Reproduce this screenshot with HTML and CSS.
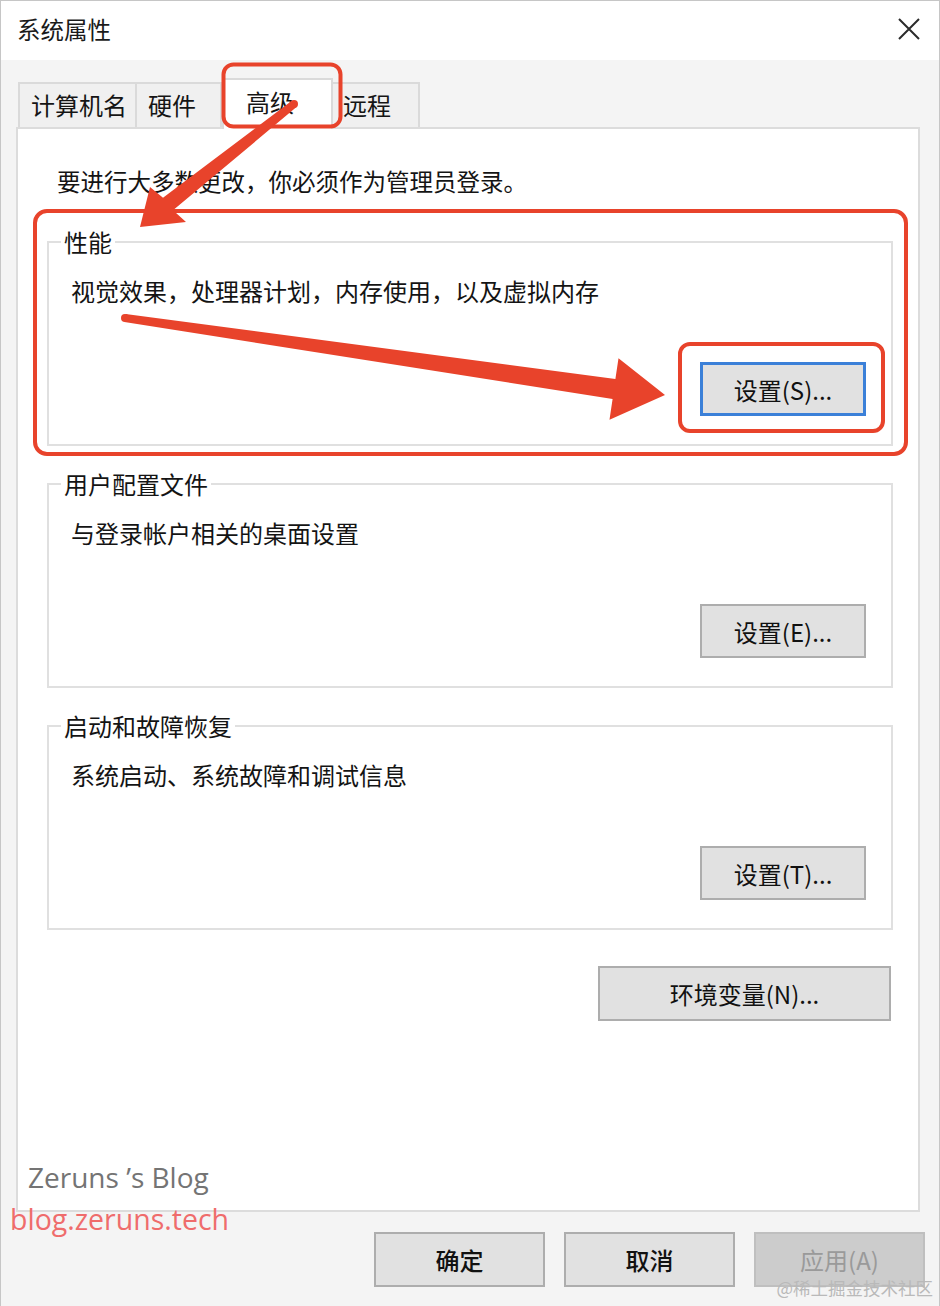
FILE: index.html
```html
<!DOCTYPE html>
<html lang="zh-CN">
<head>
<meta charset="utf-8">
<title>系统属性</title>
<link rel="stylesheet" href="styles.css">
</head>
<body>
<div class="window">
  <div class="titlebar">
    <span class="title">系统属性</span>
    <svg class="close" width="22" height="22" viewBox="0 0 22 22"><path d="M1 1 L21 21 M21 1 L1 21" stroke="#2b2b2b" stroke-width="2" fill="none"/></svg>
  </div>
  <div class="tabs">
    <div class="tab tab-first">计算机名</div>
    <div class="tab tab-next">硬件</div>
    <div class="tab tab-active">高级</div>
    <div class="tab tab-next tab-last">远程</div>
  </div>
  <div class="panel">
    <p class="admin">要进行大多数更改，你必须作为管理员登录。</p>
    <fieldset class="group">
      <legend>性能</legend>
      <p class="desc">视觉效果，处理器计划，内存使用，以及虚拟内存</p>
      <div class="group-actions"><button class="btn btn-focus">设置(S)...</button></div>
    </fieldset>
    <fieldset class="group">
      <legend>用户配置文件</legend>
      <p class="desc">与登录帐户相关的桌面设置</p>
      <div class="group-actions"><button class="btn">设置(E)...</button></div>
    </fieldset>
    <fieldset class="group">
      <legend>启动和故障恢复</legend>
      <p class="desc">系统启动、系统故障和调试信息</p>
      <div class="group-actions"><button class="btn">设置(T)...</button></div>
    </fieldset>
    <div class="env-row"><button class="btn btn-env">环境变量(N)...</button></div>
  </div>
  <div class="footer">
    <button class="btn btn-foot">确定</button>
    <button class="btn btn-foot">取消</button>
    <button class="btn btn-foot btn-disabled">应用(A)</button>
  </div>

  <div class="wm-name">Zeruns ’s Blog</div>
  <div class="wm-url">blog.zeruns.tech</div>
  <div class="wm-juejin">@稀土掘金技术社区</div>

  <svg class="annot" width="940" height="1306" viewBox="0 0 940 1306">
    <g fill="none" stroke="#e8432b" stroke-width="4">
      <rect x="223.5" y="64.5" width="117" height="62" rx="10"/>
      <rect x="35" y="211" width="871" height="243" rx="12"/>
      <rect x="680" y="344" width="203" height="87" rx="10"/>
    </g>
    <g fill="#e8432b">
      <polygon points="291.5,100.9 163,197.7 150,187 140,227 186,222 173,210.3 296.5,107.1"/>
      <circle cx="294" cy="104" r="4"/>
      <polygon points="125.6,314 615.4,379.1 618.5,358.3 665,395 609.5,419.7 612.6,398.9 124.4,322"/>
      <circle cx="125" cy="318" r="4"/>
    </g>
  </svg>
</div>
</body>
</html>
```

FILE: styles.css
```css
* { box-sizing: border-box; }
html, body { margin: 0; padding: 0; }
body {
  width: 940px;
  height: 1306px;
  font-family: "Noto Sans CJK SC", "Noto Sans", sans-serif;
  color: #141414;
  background: #f4f4f4;
}
.window {
  position: relative;
  width: 940px;
  height: 1306px;
  border: 1px solid #c6c6c6;
  border-bottom: none;
  background: #f4f4f4;
  overflow: hidden;
}
.titlebar {
  height: 59px;
  background: #ffffff;
  display: flex;
  align-items: center;
  justify-content: space-between;
  padding: 0 19px 4px 16px;
}
.title {
  font-size: 23.5px;
  line-height: 30px;
  color: #1a1a1a;
}
.tabs {
  display: flex;
  align-items: flex-end;
  margin-top: 18px;
  padding-left: 17px;
}
.tab {
  height: 45px;
  display: flex;
  align-items: center;
  padding-left: 11px;
  padding-bottom: 2px;
  font-size: 24px;
  line-height: 28px;
  background: #f0f0f0;
  border: 2px solid #dadada;
  border-bottom: none;
  color: #151515;
}
.tab-first { width: 119px; }
.tab-next { border-left: none; }
.tab:nth-child(2) { width: 85px; }
.tab-last { width: 87px; padding-left: 10px; }
.tab-active {
  position: relative;
  z-index: 1;
  width: 111px;
  height: 51px;
  margin-bottom: -2px;
  padding-left: 22px;
  padding-bottom: 6px;
  background: #ffffff;
}
.panel {
  width: 904px;
  height: 1085px;
  margin-left: 15px;
  background: #ffffff;
  border: 2px solid #dcdcdc;
  padding: 37px 25px 0 29px;
}
.admin {
  margin: 0 0 32px 10px;
  font-size: 23.5px;
  line-height: 30px;
}
.group {
  margin: 0 0 24px 0;
  padding: 0;
  border: 2px solid #e0e0e0;
  min-inline-size: 0;
}
.group legend {
  margin-left: 12px;
  padding: 0 3px;
  font-size: 24px;
  line-height: 28px;
}
.desc {
  margin: 21px 0 0 22px;
  font-size: 24px;
  line-height: 28px;
}
.group-actions {
  display: flex;
  justify-content: flex-end;
  margin: 57px 25px 28px 0;
}
.btn {
  font-family: "Noto Sans CJK SC", "Noto Sans", sans-serif;
  font-size: 24px;
  color: #111;
  background: #e1e1e1;
  border: 2px solid #adadad;
  width: 166px;
  height: 54px;
  padding: 0;
  display: flex;
  align-items: center;
  justify-content: center;
}
.btn-focus {
  border: 3px solid #3b80d8;
}
.env-row {
  display: flex;
  justify-content: flex-end;
  margin-top: 36px;
  padding-right: 2px;
}
.btn-env { width: 293px; height: 55px; }
.footer {
  display: flex;
  justify-content: flex-end;
  gap: 19px;
  margin-top: 20px;
  padding-right: 14px;
}
.btn-foot {
  width: 171px;
  height: 55px;
  font-weight: 500;
}
.btn-disabled {
  background: #cccccc;
  border-color: #bfbfbf;
  color: #9a9a9a;
  font-weight: 400;
}
.wm-name {
  position: absolute;
  left: 27px;
  top: 1156px;
  font-family: "Open Sans", "Noto Sans", sans-serif;
  font-size: 28px;
  line-height: 40px;
  color: #747474;
}
.wm-url {
  position: absolute;
  left: 9px;
  top: 1198px;
  font-family: "Open Sans", "Noto Sans", sans-serif;
  font-size: 28.5px;
  line-height: 40px;
  color: #ef6c6c;
}
.wm-juejin {
  position: absolute;
  right: 6px;
  top: 1275px;
  font-size: 17.5px;
  line-height: 24px;
  color: #b9b9b9;
}
.annot {
  position: absolute;
  left: -1px;
  top: -1px;
  pointer-events: none;
  z-index: 5;
}
```
